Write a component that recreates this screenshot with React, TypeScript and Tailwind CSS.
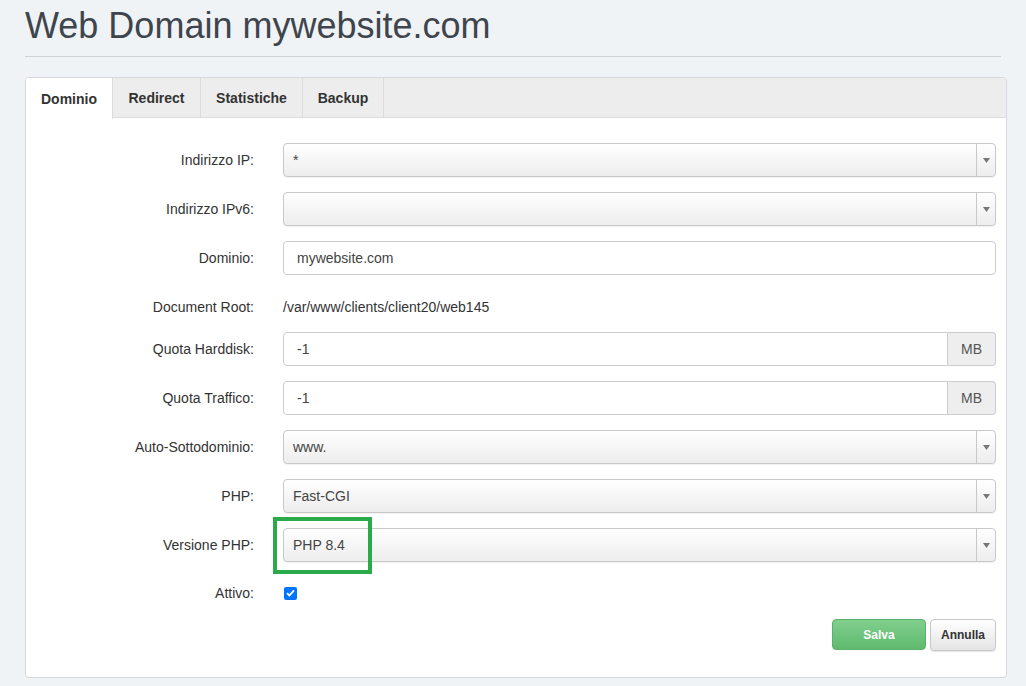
import React from "react";

const font = { fontFamily: '"Liberation Sans", Arial, sans-serif' };

function Label({ children }: { children: React.ReactNode }) {
  return (
    <div className="w-[243px] shrink-0 pr-[15px] text-right text-[14px] text-[#333]">{children}</div>
  );
}

function Select({ value }: { value: string }) {
  return (
    <div className="flex h-[34px] flex-1 items-stretch overflow-hidden rounded-[4px] border border-[#c8c8c8] bg-gradient-to-b from-white to-[#ededed] shadow-[0_1px_1px_rgba(0,0,0,0.06)]">
      <div className="flex flex-1 items-center pl-[9px] text-[14px] text-[#444]">{value}</div>
      <div className="flex w-[19px] items-center justify-center border-l border-[#c8c8c8]">
        <svg width="7" height="5" viewBox="0 0 7 5">
          <path d="M0 0H7L3.5 5Z" fill="#777" />
        </svg>
      </div>
    </div>
  );
}

function Input({ value, addon }: { value: string; addon?: string }) {
  return (
    <div className="flex h-[34px] flex-1">
      <div
        className={`flex flex-1 items-center border border-[#ccc] bg-white pl-[13px] text-[14px] text-[#444] ${
          addon ? "rounded-l-[4px]" : "rounded-[4px]"
        }`}
      >
        {value}
      </div>
      {addon && (
        <div className="flex w-[48px] items-center justify-center rounded-r-[4px] border border-l-0 border-[#ccc] bg-[#eee] text-[14px] text-[#555]">
          {addon}
        </div>
      )}
    </div>
  );
}

function Row({ label, children, mt = "mt-[15px]" }: { label: string; children: React.ReactNode; mt?: string }) {
  return (
    <div className={`flex items-center ${mt}`}>
      <Label>{label}</Label>
      <div className="flex flex-1 items-center pl-[14px]">{children}</div>
    </div>
  );
}

export default function App() {
  return (
    <div className="min-h-[686px] w-[1026px] bg-[#f0f3f6] px-[25px] pt-[3px]" style={font}>
      <h1 className="text-[36px] leading-[46px] font-normal text-[#3e454c]">Web Domain mywebsite.com</h1>
      <div className="mt-[7px] border-b border-[#cfd3d7]" />
      <div className="mt-[20px] h-[601px] w-[982px] overflow-hidden rounded-[4px] border border-[#d5d8dc] bg-white">
        <div className="flex h-[40px] border-b border-[#dcdcdc] bg-[#ededed]">
          <div className="flex h-[41px] w-[87px] items-center justify-center border-r border-[#dcdcdc] bg-white pt-[2px] text-[14px] font-bold text-[#333]">
            Dominio
          </div>
          <div className="flex w-[88px] items-center justify-center border-r border-[#dcdcdc] pt-[2px] text-[14px] font-bold text-[#333]">
            Redirect
          </div>
          <div className="flex w-[102px] items-center justify-center border-r border-[#dcdcdc] pt-[2px] text-[14px] font-bold text-[#333]">
            Statistiche
          </div>
          <div className="flex w-[81px] items-center justify-center border-r border-[#dcdcdc] pt-[2px] text-[14px] font-bold text-[#333]">
            Backup
          </div>
        </div>
        <div className="pr-[10px] pt-[25px]">
          <Row label="Indirizzo IP:" mt="mt-0">
            <Select value="*" />
          </Row>
          <Row label="Indirizzo IPv6:">
            <Select value="" />
          </Row>
          <Row label="Dominio:">
            <Input value="mywebsite.com" />
          </Row>
          <div className="mt-[22px] flex h-[20px] items-center">
            <Label>Document Root:</Label>
            <div className="pl-[14px] text-[14px] text-[#333]">/var/www/clients/client20/web145</div>
          </div>
          <Row label="Quota Harddisk:">
            <Input value="-1" addon="MB" />
          </Row>
          <Row label="Quota Traffico:">
            <Input value="-1" addon="MB" />
          </Row>
          <Row label="Auto-Sottodominio:">
            <Select value="www." />
          </Row>
          <Row label="PHP:">
            <Select value="Fast-CGI" />
          </Row>
          <Row label="Versione PHP:">
            <div className="relative flex flex-1">
              <Select value="PHP 8.4" />
              <div className="pointer-events-none absolute left-[-10px] top-[-11px] h-[57px] w-[99px] border-[4px] border-[#2aaa48]" />
            </div>
          </Row>
          <div className="mt-[24px] flex h-[14px] items-center">
            <Label>Attivo:</Label>
            <div className="pl-[15px]">
              <div className="flex h-[13px] w-[13px] items-center justify-center rounded-[2px] bg-[#0075ff]">
                <svg width="9" height="8" viewBox="0 0 9 8">
                  <path d="M1 4.2L3.4 6.5L8 1.3" stroke="white" strokeWidth="1.8" fill="none" />
                </svg>
              </div>
            </div>
          </div>
          <div className="mt-[19px] flex justify-end gap-[4px]">
            <button className="h-[31px] w-[94px] rounded-[4px] border border-[#5cb06a] bg-gradient-to-b from-[#80cf8d] to-[#5fba6e] text-[12px] font-bold text-white">
              Salva
            </button>
            <button className="h-[32px] w-[66px] rounded-[4px] border border-[#c8c8c8] bg-gradient-to-b from-white to-[#e4e4e4] text-[12px] font-bold text-[#333] shadow-[0_1px_1px_rgba(0,0,0,0.1)]">
              Annulla
            </button>
          </div>
        </div>
      </div>
    </div>
  );
}
